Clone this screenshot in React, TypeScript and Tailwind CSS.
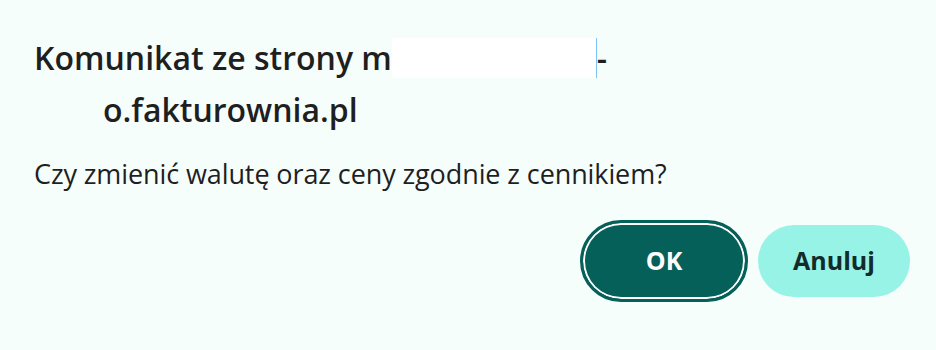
export default function App() {
  return (
    <div className="w-[936px] h-[350px] bg-[#f6fefc] text-[#1f1f1f] font-['Open_Sans',sans-serif] overflow-hidden">
      <div className="pt-[32px] pl-[34px] pr-[26px]">
        {/* Title (site address partly covered) */}
        <h1 className="text-[32px] font-semibold leading-[52px]">
          <div className="flex items-center">
            <span>Komunikat ze strony m</span>
            <span className="w-[205px] h-[40px] bg-white border-r border-[#7cc4f5]" />
            <span>-</span>
          </div>
          <div className="pl-[69px]">o.fakturownia.pl</div>
        </h1>
        <p className="mt-[20px] text-[27px] leading-[36px] tracking-[-0.1px]">Czy zmienić walutę oraz ceny zgodnie z cennikiem?</p>

        <div className="mt-[28px] flex justify-end items-center gap-[10px]">
          <button className="w-[168px] h-[82px] rounded-full bg-[#06605a] border-[3px] border-[#06605a] shadow-[inset_0_0_0_2px_white] text-white text-[25px] font-bold">
            OK
          </button>
          <button className="w-[152px] h-[72px] rounded-full bg-[#96f3e6] text-[#132b2b] text-[25px] font-bold">
            Anuluj
          </button>
        </div>
      </div>
    </div>
  )
}
